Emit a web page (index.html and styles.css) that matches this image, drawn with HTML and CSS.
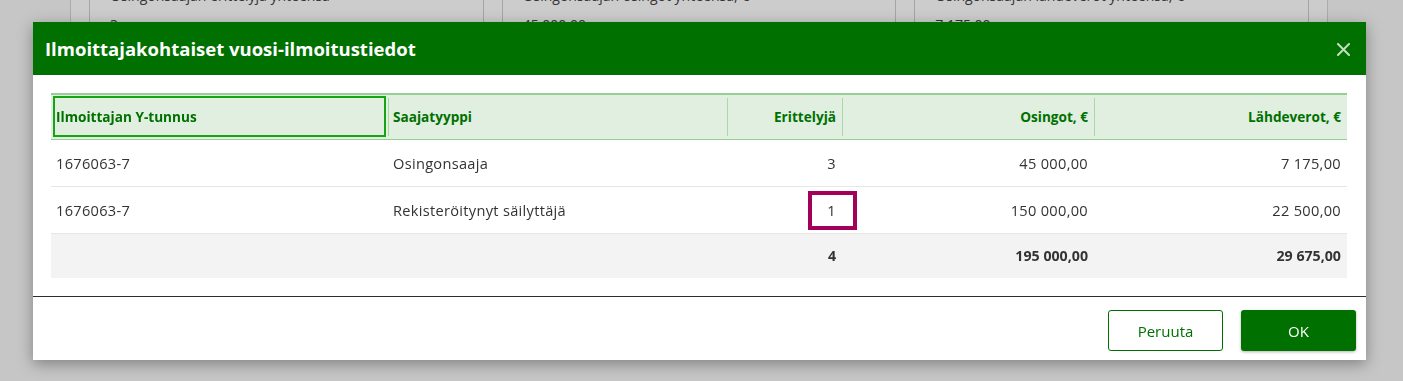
FILE: index.html
```html
<!DOCTYPE html>
<html lang="fi">
<head>
    <meta charset="UTF-8">
    <title>Ilmoittajakohtaiset vuosi-ilmoitustiedot</title>
    <link rel="stylesheet" href="styles.css">
</head>
<body>
    <div class="page">
        <div class="summary">
            <div class="sum-card">
                <div class="sum-label">Osingonsaajan erittelyjä yhteensä</div>
                <div class="sum-value">3</div>
            </div>
            <div class="sum-card">
                <div class="sum-label">Osingonsaajan osingot yhteensä, €</div>
                <div class="sum-value">45 000,00</div>
            </div>
            <div class="sum-card">
                <div class="sum-label">Osingonsaajan lähdeverot yhteensä, €</div>
                <div class="sum-value">7 175,00</div>
            </div>
        </div>
    </div>

    <div class="backdrop"></div>

    <div class="dialog">
        <header class="dialog-header">
            <h1>Ilmoittajakohtaiset vuosi-ilmoitustiedot</h1>
            <button class="close" aria-label="Sulje">
                <svg width="13" height="13" viewBox="0 0 13 13">
                    <path d="M1 1 L12 12 M12 1 L1 12" stroke="currentColor" stroke-width="2" stroke-linecap="square"/>
                </svg>
            </button>
        </header>

        <div class="dialog-body">
            <table class="grid">
                <colgroup>
                    <col style="width: 337px">
                    <col style="width: 339px">
                    <col style="width: 115px">
                    <col style="width: 252px">
                    <col style="width: 253px">
                </colgroup>
                <thead>
                    <tr>
                        <th class="focused">Ilmoittajan Y-tunnus</th>
                        <th>Saajatyyppi</th>
                        <th class="num">Erittelyjä</th>
                        <th class="num">Osingot, €</th>
                        <th class="num">Lähdeverot, €</th>
                    </tr>
                </thead>
                <tbody>
                    <tr>
                        <td>1676063-7</td>
                        <td>Osingonsaaja</td>
                        <td class="num">3</td>
                        <td class="num">45 000,00</td>
                        <td class="num">7 175,00</td>
                    </tr>
                    <tr>
                        <td>1676063-7</td>
                        <td>Rekisteröitynyt säilyttäjä</td>
                        <td class="num highlight">1</td>
                        <td class="num">150 000,00</td>
                        <td class="num">22 500,00</td>
                    </tr>
                </tbody>
                <tfoot>
                    <tr>
                        <td></td>
                        <td></td>
                        <td class="num">4</td>
                        <td class="num">195 000,00</td>
                        <td class="num">29 675,00</td>
                    </tr>
                </tfoot>
            </table>
        </div>

        <footer class="dialog-footer">
            <button class="btn btn-secondary">Peruuta</button>
            <button class="btn btn-primary">OK</button>
        </footer>
    </div>
</body>
</html>
```

FILE: styles.css
```css
:root {
    --green: #007000;
    --green-light: #e1efe1;
    --green-line: #94d094;
    --text: #333333;
    --highlight: #a3005a;
}

*,
*::before,
*::after {
    margin: 0;
    padding: 0;
    box-sizing: border-box;
}

html, body {
    height: 100%;
}

body {
    font-family: 'Open Sans', 'Noto Sans', sans-serif;
    color: var(--text);
    background: #f8f8f8;
    overflow: hidden;
}

/* page behind the dialog */
.page {
    margin: 0 75px 0 70px;
    height: 100%;
    background: #ffffff;
    border-left: 1px solid #d6d6d6;
    border-right: 1px solid #d6d6d6;
    padding: 0 18px;
}

.summary {
    display: grid;
    grid-template-columns: repeat(3, 1fr);
    gap: 18px;
    margin-top: -24px;
}

.sum-card {
    border: 1px solid #cfcfcf;
    border-top: none;
    padding: 10px 20px 16px;
    height: 90px;
}

.sum-label {
    font-size: 14px;
    color: #444;
}

.sum-value {
    font-size: 14px;
    margin-top: 10px;
    color: #444;
}

.backdrop {
    position: fixed;
    inset: 0;
    background: rgba(0, 0, 0, 0.2);
}

/* dialog */
.dialog {
    position: absolute;
    left: 33px;
    top: 22px;
    width: 1333px;
    background: #ffffff;
    box-shadow: 0 4px 14px rgba(0, 0, 0, 0.35);
}

.dialog-header {
    height: 53px;
    background: var(--green);
    display: flex;
    align-items: center;
    justify-content: space-between;
    padding: 0 16px 0 12px;
}

.dialog-header h1 {
    color: #ffffff;
    font-size: 18.5px;
    font-weight: 700;
}

.close {
    background: none;
    border: none;
    color: #c4dcc4;
    display: flex;
    cursor: pointer;
    margin-top: 1px;
}

.dialog-body {
    padding: 18px;
    border-bottom: 1px solid #2d2d2d;
}

.grid {
    width: 1296px;
    border-collapse: collapse;
    table-layout: fixed;
    font-size: 14.6px;
    letter-spacing: 0.3px;
}

.grid th {
    background: var(--green-light);
    color: var(--green);
    font-size: 13.6px;
    font-weight: 700;
    letter-spacing: 0;
    text-align: left;
    height: 45px;
    padding: 0 5px;
    border-top: 2px solid var(--green-line);
    border-bottom: 1px solid var(--green-line);
    position: relative;
}

.grid th + th::before {
    content: "";
    position: absolute;
    left: 0;
    top: 3px;
    bottom: 3px;
    border-left: 1px solid #a9d8a9;
}

.grid th.focused {
    outline: 2px solid #16a316;
    outline-offset: -4px;
    box-shadow: -18px 0 0 #f3f3f3;
}

.grid td {
    height: 47px;
    padding: 0 5px;
    border-bottom: 1px solid #e6e6e6;
}

.grid .num {
    text-align: right;
    padding-right: 6px;
}

.grid tfoot td {
    background: #f3f3f3;
    font-size: 14.2px;
    font-weight: 700;
    letter-spacing: 0;
    height: 45px;
    border-bottom: none;
}

.highlight {
    position: relative;
}

.highlight::after {
    content: "";
    position: absolute;
    left: 81px;
    top: 4px;
    width: 49px;
    height: 39px;
    border: 4px solid var(--highlight);
}

.dialog-footer {
    display: flex;
    justify-content: flex-end;
    gap: 18px;
    padding: 13px 10px 9px;
}

.btn {
    width: 115px;
    height: 41px;
    border-radius: 3px;
    font-family: inherit;
    font-size: 15px;
    cursor: pointer;
}

.btn-secondary {
    background: #ffffff;
    color: var(--green);
    border: 1px solid var(--green);
}

.btn-primary {
    background: var(--green);
    color: #ffffff;
    border: none;
    box-shadow: 0 1px 3px rgba(0, 0, 0, 0.3);
}
```
